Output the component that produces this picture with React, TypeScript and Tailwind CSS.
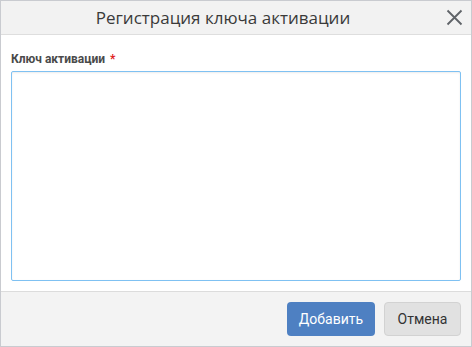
import React from 'react';

export default function App() {
  return (
    <div className="w-[472px] h-[347px] bg-white border border-[#c9cbd0] flex flex-col overflow-hidden" style={{ fontFamily: 'Roboto, "Liberation Sans", sans-serif' }}>
      {/* Header */}
      <div className="h-[34px] shrink-0 bg-[#f2f2f2] border-b border-[#dedede] flex items-center pr-[8px]">
        <span className="flex-1 text-center text-[17px] text-[#3a3a3a] leading-none" style={{ fontFamily: '"Open Sans", sans-serif' }}>
          Регистрация ключа активации
        </span>
        <button className="w-[18px] h-[18px] flex items-center justify-center text-[#5f6368]">
          <svg width="17" height="17" viewBox="0 0 17 17" fill="none" stroke="currentColor" strokeWidth="1.8">
            <path d="M1.5 1.5 L15.5 15.5 M15.5 1.5 L1.5 15.5" />
          </svg>
        </button>
      </div>

      {/* Body */}
      <div className="flex-1 flex flex-col px-[10px] pt-[17px] pb-[10px]">
        <label className="text-[12px] font-bold text-[#4a4a4a] leading-[14px] mb-[5px]">
          Ключ активации <span className="text-[#e02020] ml-[2px]">*</span>
        </label>
        <textarea className="flex-1 w-full resize-none border border-[#7fc1f2] rounded-[2px] outline-none shadow-[inset_0_1px_2px_rgba(0,0,0,0.08)]" />
      </div>

      {/* Footer */}
      <div className="h-[55px] shrink-0 bg-[#f3f3f3] border-t border-[#dcdcdc] flex items-center justify-end gap-[9px] pr-[10px]">
        <button className="w-[88px] h-[34px] rounded-[4px] bg-[#4e80c2] text-white text-[14px]">Добавить</button>
        <button className="w-[77px] h-[34px] rounded-[4px] bg-[#e1e1e1] border border-[#d2d2d2] text-[#333] text-[14px]">Отмена</button>
      </div>
    </div>
  );
}
